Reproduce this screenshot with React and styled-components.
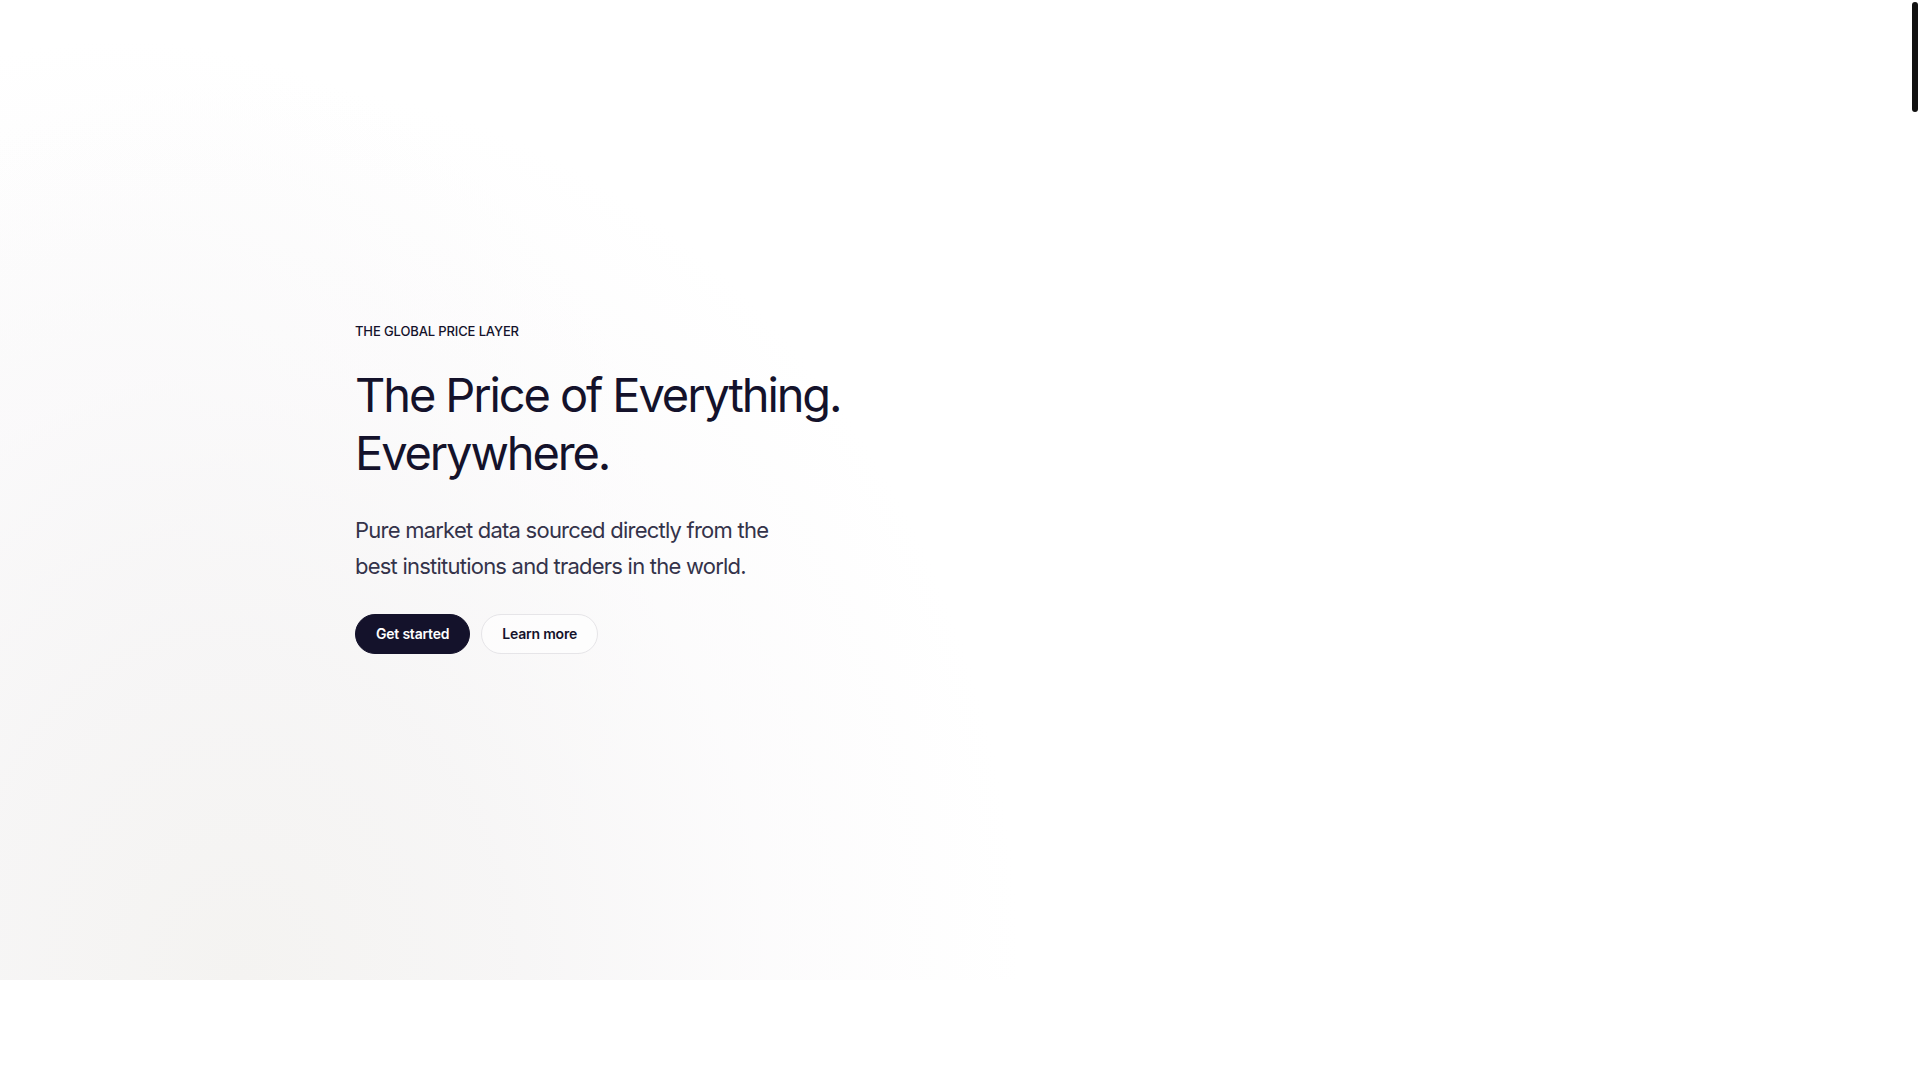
import React from 'react';
import styled, { createGlobalStyle } from 'styled-components';

const GlobalStyle = createGlobalStyle`
    body {
        margin: 0;
        background: #ffffff;
        font-family: Inter, "Noto Sans", sans-serif;
        color: #14122b;
    }
    * {
        box-sizing: border-box;
    }
`;

const Hero = styled.section`
    height: 980px;
    padding: 0 10px 4px 0;
    display: flex;
    align-items: center;
    background:
        radial-gradient(ellipse 780px 900px at 240px 980px, rgba(244, 243, 241, 1) 0%, rgba(246, 245, 245, 0.92) 35%, rgba(250, 249, 250, 0.6) 68%, rgba(255, 255, 255, 0) 100%),
        radial-gradient(ellipse 540px 520px at 120px 560px, rgba(247, 246, 247, 0.8) 0%, rgba(255, 255, 255, 0) 100%),
        #ffffff;
`;

const Container = styled.div`
    width: 100%;
    max-width: 1200px;
    margin: 0 auto;
    display: flex;
    flex-direction: column;
    align-items: flex-start;
`;

const Eyebrow = styled.p`
    margin: 0 0 27px;
    font-size: 13px;
    line-height: 16px;
    font-weight: 500;
    letter-spacing: -0.01em;
    text-transform: uppercase;
    color: #14122b;
`;

const Title = styled.h1`
    margin: 0 0 30px;
    font-size: 47px;
    line-height: 58px;
    font-weight: 400;
    letter-spacing: -0.045em;
    color: #14122b;
`;

const Lead = styled.p`
    margin: 0 0 30px;
    max-width: 440px;
    font-size: 22px;
    line-height: 36px;
    font-weight: 400;
    letter-spacing: -0.035em;
    color: #34334a;
`;

const Actions = styled.div`
    display: flex;
    gap: 11px;
`;

const Button = styled.button`
    height: 40px;
    padding: 0 20px;
    border-radius: 20px;
    font-family: Inter, "Noto Sans", sans-serif;
    font-size: 14px;
    font-weight: 600;
    letter-spacing: -0.015em;
    cursor: pointer;
    border: 1px solid ${props => props.primary ? '#14122b' : '#e6e5e8'};
    background: ${props => props.primary ? '#14122b' : 'rgba(255, 255, 255, 0.6)'};
    color: ${props => props.primary ? '#ffffff' : '#14122b'};
`;

const Rest = styled.div`
    height: 100px;
    background: #ffffff;
`;

const ScrollThumb = styled.div`
    position: fixed;
    top: 2px;
    right: 2px;
    width: 6px;
    height: 110px;
    border-radius: 3px;
    background: #111111;
`;

const App = () => {
    return (
        <>
            <GlobalStyle />
            <Hero>
                <Container>
                    <Eyebrow>The global price layer</Eyebrow>
                    <Title>The Price of Everything.<br />Everywhere.</Title>
                    <Lead>Pure market data sourced directly from the best institutions and traders in the world.</Lead>
                    <Actions>
                        <Button primary>Get started</Button>
                        <Button>Learn more</Button>
                    </Actions>
                </Container>
            </Hero>
            <Rest />
            <ScrollThumb />
        </>
    );
};

export default App;
